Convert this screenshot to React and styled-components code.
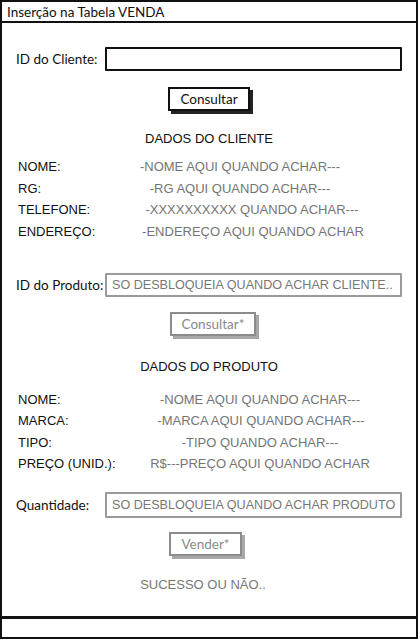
import styled, { createGlobalStyle } from 'styled-components';

const GlobalStyle = createGlobalStyle`
  html, body {
    margin: 0;
    padding: 0;
    background: #fff;
  }
  body {
    width: 420px;
    height: 640px;
    overflow: hidden;
  }
`;

const sketchFont = `Lato, 'Open Sans', sans-serif`;
const plainFont = `'Liberation Sans', Arial, sans-serif`;

const Window = styled.div`
  display: flex;
  flex-direction: column;
  width: 418px;
  height: 639px;
  box-sizing: border-box;
`;

const TitleBar = styled.div`
  height: 23px;
  box-sizing: border-box;
  border: 2px solid #111;
  padding-left: 5px;
  display: flex;
  align-items: center;
  font-family: ${sketchFont};
  font-size: 13.5px;
  color: #111;
`;

const Body = styled.div`
  flex: 1;
  border-left: 2px solid #111;
  border-right: 2px solid #111;
  padding: 0 14px;
  display: flex;
  flex-direction: column;
`;

const StatusBar = styled.div`
  height: 23px;
  box-sizing: border-box;
  border: 2px solid #111;
  border-top-width: 3px;
`;

const FieldRow = styled.div`
  display: flex;
  align-items: center;
  margin-top: ${({ top }) => top}px;
`;

const Label = styled.span`
  width: 89px;
  flex: none;
  font-family: ${sketchFont};
  font-size: 13.5px;
  color: #111;
`;

const Input = styled.div`
  width: 297px;
  height: ${({ h }) => h || 24}px;
  box-sizing: border-box;
  border: 2px solid ${({ disabled }) => (disabled ? '#9a9a9a' : '#111')};
  border-radius: 1px;
  padding-left: 5px;
  display: flex;
  align-items: center;
  font-family: ${plainFont};
  font-size: 12.6px;
  color: #777;
  white-space: nowrap;
  overflow: hidden;
`;

const Button = styled.div`
  align-self: center;
  margin-top: ${({ top }) => top}px;
  margin-left: ${({ shift }) => shift || 0}px;
  height: 24px;
  padding: 0 ${({ pad }) => pad || 8}px;
  box-sizing: border-box;
  border: 2px solid ${({ disabled }) => (disabled ? '#8c8c8c' : '#111')};
  box-shadow: 3px 3px 0 ${({ disabled }) => (disabled ? '#a8a8a8' : '#222')};
  background: #fff;
  display: flex;
  align-items: center;
  font-family: ${sketchFont};
  font-size: 13.5px;
  color: ${({ disabled }) => (disabled ? '#8a8a8a' : '#111')};
`;

const Heading = styled.div`
  margin-top: ${({ top }) => top}px;
  text-align: center;
  font-family: ${plainFont};
  font-size: 13px;
  line-height: 16px;
  color: ${({ muted }) => (muted ? '#777' : '#111')};
  transform: translateX(${({ shift }) => shift || 0}px);
`;

const DataList = styled.div`
  margin-top: ${({ top }) => top}px;
  display: grid;
  grid-template-columns: ${({ labelWidth }) => labelWidth}px 1fr;
  grid-auto-rows: 21.6px;
  align-items: center;
  font-family: ${plainFont};
  font-size: 13px;
  padding-left: 2px;
`;

const DataLabel = styled.span`
  color: #111;
  white-space: nowrap;
`;

const DataValue = styled.span`
  color: #757575;
  text-align: center;
  white-space: nowrap;
  transform: translateX(${({ shift }) => shift || 0}px);
`;

const clientRows = [
  ['NOME:', '-NOME AQUI QUANDO ACHAR---', -3],
  ['RG:', '-RG AQUI QUANDO ACHAR---', -3],
  ['TELEFONE:', '-XXXXXXXXXX QUANDO ACHAR---', 9],
  ['ENDEREÇO:', '-ENDEREÇO AQUI QUANDO ACHAR', 10],
];

const productRows = [
  ['NOME:', '-NOME AQUI QUANDO ACHAR---', 0],
  ['MARCA:', '-MARCA AQUI QUANDO ACHAR---', 1],
  ['TIPO:', '-TIPO QUANDO ACHAR---', 0],
  ['PREÇO (UNID.):', 'R$---PREÇO AQUI QUANDO ACHAR', 0],
];

const App = () => (
  <>
    <GlobalStyle />
    <Window>
      <TitleBar>Inserção na Tabela VENDA</TitleBar>
      <Body>
        <FieldRow top={24}>
          <Label>ID do Cliente:</Label>
          <Input />
        </FieldRow>
        <Button top={16} pad={10}>Consultar</Button>

        <Heading top={20}>DADOS DO CLIENTE</Heading>
        <DataList top={9} labelWidth={66}>
          {clientRows.map(([label, value, shift]) => (
            <>
              <DataLabel key={label}>{label}</DataLabel>
              <DataValue shift={shift}>{value}</DataValue>
            </>
          ))}
        </DataList>

        <FieldRow top={31}>
          <Label>ID do Produto:</Label>
          <Input disabled>SO DESBLOQUEIA QUANDO ACHAR CLIENTE..</Input>
        </FieldRow>
        <Button top={15} disabled pad={10} shift={8}>Consultar*</Button>

        <Heading top={23}>DADOS DO PRODUTO</Heading>
        <DataList top={13} labelWidth={100}>
          {productRows.map(([label, value, shift]) => (
            <>
              <DataLabel key={label}>{label}</DataLabel>
              <DataValue shift={shift}>{value}</DataValue>
            </>
          ))}
        </DataList>

        <FieldRow top={17}>
          <Label>Quantidade:</Label>
          <Input disabled h={26}>SO DESBLOQUEIA QUANDO ACHAR PRODUTO</Input>
        </FieldRow>
        <Button top={14} disabled pad={10} shift={-7}>Vender*</Button>

        <Heading top={21} muted shift={-6}>SUCESSO OU NÃO..</Heading>
      </Body>
      <StatusBar />
    </Window>
  </>
);

export default App;
